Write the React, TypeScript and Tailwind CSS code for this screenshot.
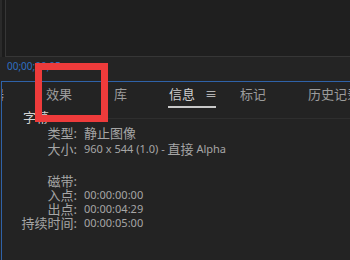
import React from "react";

const font = { fontFamily: '"Noto Sans", "Noto Sans CJK SC", sans-serif' };

function Row({ label, value, className = "" }: { label: string; value?: React.ReactNode; className?: string }) {
  return (
    <div className={"flex h-[14px] items-center leading-[14px] " + className}>
      <div className="w-[75px] shrink-0 text-right">{label}</div>
      <div className="flex items-center whitespace-nowrap pl-[7px]">{value}</div>
    </div>
  );
}

const Lat = ({ children }: { children: React.ReactNode }) => <span className="text-[11px]">{children}</span>;

export default function App() {
  return (
    <div className="relative h-[260px] w-[350px] overflow-hidden bg-[#242424]" style={font}>
      {/* top panel */}
      <div className="flex h-[57px]">
        <div className="w-[2px] bg-[#2a2a2a]" />
        <div className="w-[3px] bg-[#1c1c1c]" />
        <div className="flex-1 border-b border-l border-[#363636] bg-[#1f1f1f]" />
      </div>
      {/* timecode row */}
      <div className="flex h-[24px] items-start pl-[7px] pt-[2px] text-[10px] leading-[14px] text-[#2f6fc0]">00;00;00;05</div>
      {/* info panel */}
      <div className="ml-[1px] h-[179px] border-l border-t border-[#2f62a8] bg-[#232323]">
        <div className="flex h-[26px] items-start gap-[42px] overflow-hidden whitespace-nowrap pt-[4px] text-[13px] leading-[17px] text-[#9c9c9c]">
          <div className="-ml-[11px]">器</div>
          <div>效果</div>
          <div>库</div>
          <div className="flex h-[22px] w-[48px] -ml-[1px] items-start border-b-2 border-[#c8c8c8] pl-[1px] text-[#d0d0d0]">
            <span>信息</span>
            <span className="ml-[10px] text-[12px]">≡</span>
          </div>
          <div className="-ml-[18px]">标记</div>
          <div>历史记录</div>
        </div>
        <div className="flex h-[18px] items-start pt-[2px]">
          <div className="pl-[21px] text-[13px] leading-[14px] text-[#d2d2d2]">字幕:</div>
          <div className="mt-[8px] flex-1 border-t border-[#2e2e2e]" />
        </div>
        <div className="text-[13px] text-[#a6a6a6]">
          <Row label="类型:" value="静止图像" />
          <Row label="大小:" value={<><Lat>960 x 544 (1.0) -&nbsp;</Lat>直接<Lat>&nbsp;Alpha</Lat></>} className="mt-[2px]" />
          <Row label="磁带:" className="mt-[18px]" />
          <Row label="入点:" value={<Lat>00:00:00:00</Lat>} />
          <Row label="出点:" value={<Lat>00:00:04:29</Lat>} />
          <Row label="持续时间:" value={<Lat>00:00:05:00</Lat>} />
        </div>
      </div>
      {/* red highlight */}
      <div className="absolute left-[35px] top-[63px] h-[59px] w-[73px] border-[7px] border-[#ee3b3b]" />
    </div>
  );
}
